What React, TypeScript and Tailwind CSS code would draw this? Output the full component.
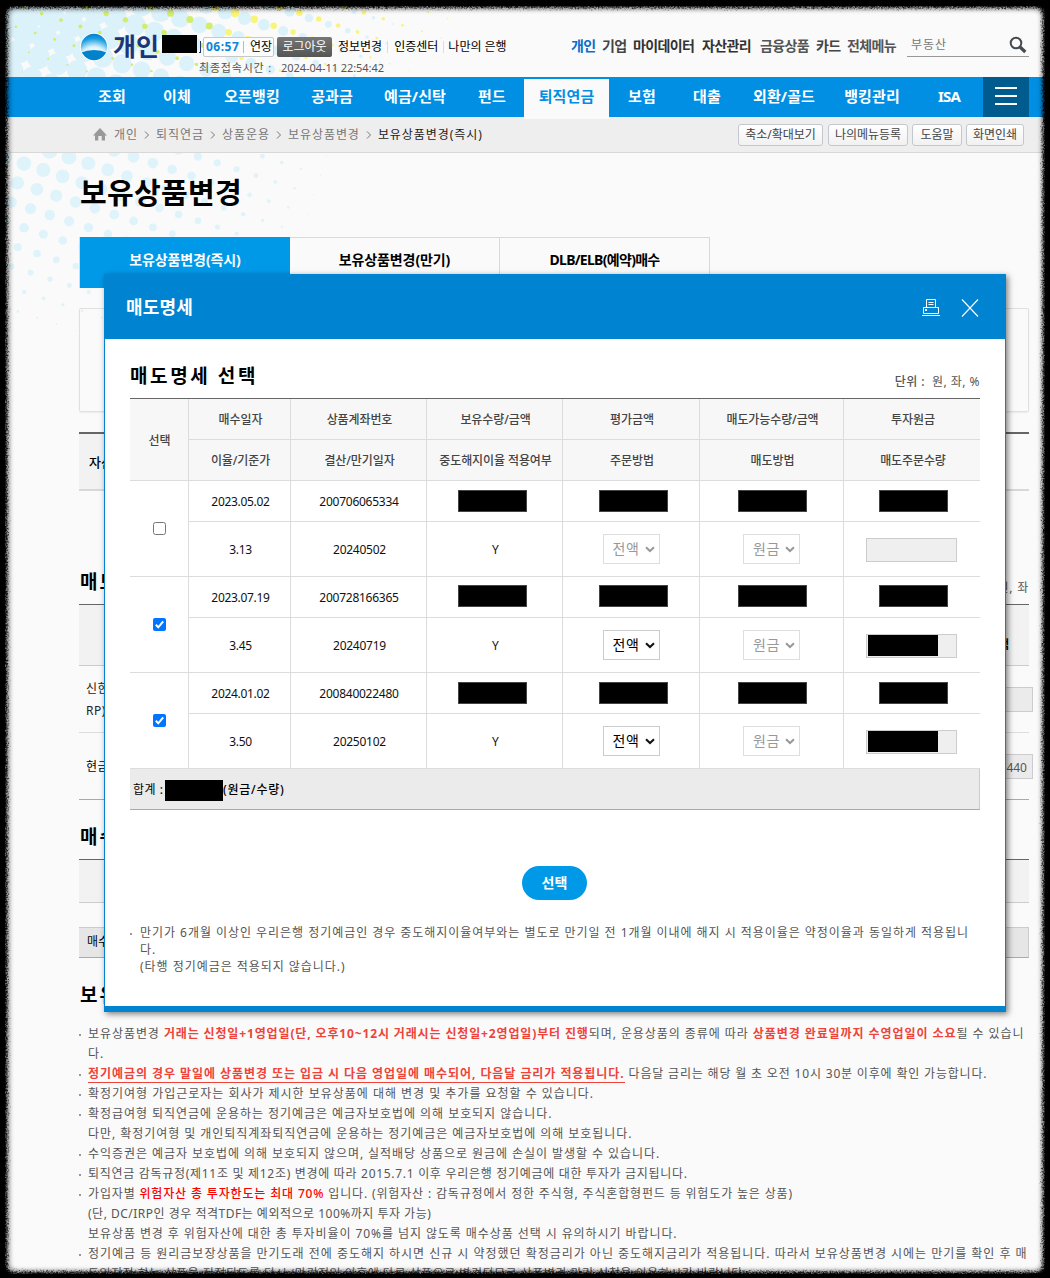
import type { ReactNode } from "react";

const gnbItems = [
  { label: "조회", width: "w-[64px]" },
  { label: "이체", width: "w-[66px]" },
  { label: "오픈뱅킹", width: "w-[84px]" },
  { label: "공과금", width: "w-[76px]" },
  { label: "예금/신탁", width: "w-[90px]" },
  { label: "펀드", width: "w-[64px]" },
  { label: "퇴직연금", width: "w-[85px]", active: true },
  { label: "보험", width: "w-[66px]" },
  { label: "대출", width: "w-[64px]" },
  { label: "외환/골드", width: "w-[90px]" },
  { label: "뱅킹관리", width: "w-[86px]" },
  { label: "ISA", width: "w-[68px]" },
];

const siteLinks = [
  { label: "개인", style: "w-[31px] text-[#0a6fc9]" },
  { label: "기업", style: "w-[31px] text-[#444]" },
  { label: "마이데이터", style: "w-[69px] text-[#333]" },
  { label: "자산관리", style: "w-[58px] text-[#333]" },
  { label: "금융상품", style: "w-[56px] text-[#555]" },
  { label: "카드", style: "w-[31px] text-[#444]" },
  { label: "전체메뉴", style: "w-[60px] text-[#555]" },
];

const crumbs = ["개인", "퇴직연금", "상품운용", "보유상품변경", "보유상품변경(즉시)"];

const pageTools = [
  { label: "축소/확대보기", style: "w-[85px]" },
  { label: "나의메뉴등록", style: "ml-[5px] w-[80px]" },
  { label: "도움말", style: "ml-1 w-[50px]" },
  { label: "화면인쇄", style: "ml-1 w-[58px]" },
];

const headTop = ["매수일자", "상품계좌번호", "보유수량/금액", "평가금액", "매도가능수량/금액", "투자원금"];
const headBottom = ["이율/기준가", "결산/만기일자", "중도해지이율 적용여부", "주문방법", "매도방법", "매도주문수량"];

const holdings = [
  { date: "2023.05.02", account: "200706065334", rate: "3.13", due: "20240502", checked: false, shift: "" },
  { date: "2023.07.19", account: "200728166365", rate: "3.45", due: "20240719", checked: true, shift: "pb-[3px]" },
  { date: "2024.01.02", account: "200840022480", rate: "3.50", due: "20250102", checked: true, shift: "" },
];

// halftone grid used by the page background
function lattice(x0: number, y0: number, maxX: number, minY: number, maxY: number, radius: (x: number, y: number) => number) {
  const dots: { x: number; y: number; r: number }[] = [];
  for (let a = -30; a <= 30; a++) {
    for (let b = -30; b <= 30; b++) {
      const x = x0 + a * 19.35 - b * 6.4;
      const y = y0 + a * 6.35 + b * 19.3;
      if (x < -10 || x > maxX || y < minY || y > maxY) continue;
      const r = radius(x, y);
      if (r > 0.3) dots.push({ x, y, r });
    }
  }
  return dots;
}

const headerBlue = lattice(309, 18, 420, -15, 95, (x, y) => 15.4 * (1 - Math.hypot((x - 20) / 400, y / 230)));
const headerYellow = lattice(235, 13, 500, -5, 77, (x, y) => {
  const side = x < 235 ? 1 - (235 - x) / 330 : 1 - (x - 235) / 260;
  return 5 * side * (1 - y / 105);
});
const bodyBlue = lattice(69, 157, 400, 140, 340, (x, y) => 7.9 * (1 - Math.hypot(Math.max(x - 60, 0) / 290, (y - 150) / 195)));

function Halftone() {
  return (
    <svg className="pointer-events-none absolute left-0 top-0" width="1050" height="360" viewBox="0 0 1050 360">
      <defs>
        <clipPath id="header-area">
          <rect width="1050" height="77" />
        </clipPath>
      </defs>
      <g clipPath="url(#header-area)">
        {headerBlue.map((d, i) => (
          <circle key={i} cx={d.x} cy={d.y} r={d.r} fill="#dcf2fa" />
        ))}
        {headerYellow.map((d, i) => (
          <circle key={i} cx={d.x} cy={d.y} r={d.r} fill={d.x < 215 ? "#d2ec6c" : "#f9f47c"} />
        ))}
      </g>
      {bodyBlue.map((d, i) => (
        <circle key={i} cx={d.x} cy={d.y} r={d.r} fill="#dff3fa" />
      ))}
    </svg>
  );
}

function TornFrame() {
  return (
    <svg className="pointer-events-none absolute left-0 top-0 z-30" width="1050" height="1278" viewBox="0 0 1050 1278">
      <defs>
        <filter id="torn" x="0" y="0" width="1050" height="1278" filterUnits="userSpaceOnUse">
          <feGaussianBlur in="SourceGraphic" stdDeviation="1.5" result="soft" />
          <feTurbulence type="fractalNoise" baseFrequency="0.6" numOctaves="2" seed="4" result="noise" />
          <feDisplacementMap in="soft" in2="noise" scale="6" xChannelSelector="R" yChannelSelector="G" />
        </filter>
        <filter id="haze" x="0" y="0" width="1050" height="1278" filterUnits="userSpaceOnUse">
          <feGaussianBlur in="SourceGraphic" stdDeviation="2" />
        </filter>
      </defs>
      <path
        filter="url(#haze)"
        fillRule="evenodd"
        opacity="0.35"
        d="M-30 -30H1080V1308H-30Z M16 10H1034Q1041 10 1041 17V1262Q1041 1270 1034 1270H17Q10 1270 10 1262V17Q10 10 16 10Z"
      />
      <path
        filter="url(#torn)"
        fillRule="evenodd"
        d="M-30 -30H1080V1308H-30Z M14 7.500H1036Q1043 7.500 1043 15V1264Q1043 1272 1036 1272H14Q7 1272 7 1264V15Q7 7.500 14 7.500Z"
      />
      <path fillRule="evenodd" d="M0 0H1050V1278H0Z M5 6V1274H1045V6Z" />
    </svg>
  );
}

function Logo() {
  return (
    <svg className="shrink-0" width="28" height="28" viewBox="0 0 28 28">
      <defs>
        <radialGradient id="logo-sky" cx="0.5" cy="1" r="1">
          <stop offset="0.35" stopColor="#ffffff" />
          <stop offset="0.52" stopColor="#d5effb" />
          <stop offset="0.8" stopColor="#1b9fe0" />
          <stop offset="1" stopColor="#0078c8" />
        </radialGradient>
        <clipPath id="logo-clip">
          <circle cx="14" cy="14" r="13.2" />
        </clipPath>
      </defs>
      <circle cx="14" cy="14" r="14" fill="#fff" />
      <g clipPath="url(#logo-clip)">
        <rect width="28" height="28" fill="url(#logo-sky)" />
        <path d="M0 20Q14 14 28 20V28H0Z" fill="#0083cb" />
      </g>
    </svg>
  );
}

function Arrow({ color }: { color: string }) {
  return (
    <svg width="10" height="7" viewBox="0 0 10 7" fill="none" stroke={color} strokeWidth="2">
      <path d="M1 1.200L5 5L9 1.200" />
    </svg>
  );
}

function SelectBox({ label, disabled }: { label: string; disabled: boolean }) {
  return (
    <div
      className={`flex h-[30px] w-[57px] items-center justify-between border bg-white pl-[9px] pr-[4px] text-[14px] leading-7 tracking-[0.5px] ${
        disabled ? "border-[#dedede] text-[#999]" : "border-[#ccc] text-black"
      }`}
    >
      {label}
      <Arrow color={disabled ? "#999" : "#111"} />
    </div>
  );
}

function Checkbox({ checked }: { checked: boolean }) {
  if (!checked) return <span className="h-[13px] w-[13px] rounded-[2.5px] border border-[#767676] bg-white" />;
  return (
    <span className="flex h-[13px] w-[13px] items-center justify-center rounded-[2px] bg-[#0075ff]">
      <svg width="11" height="11" viewBox="0 0 11 11" fill="none" stroke="#fff" strokeWidth="2">
        <path d="M1.800 5.800L4.300 8.300L9.200 2.300" />
      </svg>
    </span>
  );
}

function Masked() {
  return <span className="h-[22px] w-[69px] border border-[#444] bg-black" />;
}

function Cell({ children, className = "" }: { children?: ReactNode; className?: string }) {
  return <div className={`flex items-center justify-center border-b border-r border-[#dcdcdc] ${className}`}>{children}</div>;
}

function Note({ children, className = "" }: { children: ReactNode; className?: string }) {
  return (
    <li className={`flex ${className}`}>
      <span className="mt-[11px] h-[2px] w-[2px] shrink-0 bg-[#999]" />
      <div className="ml-[7px] whitespace-nowrap pt-px -mb-px">{children}</div>
    </li>
  );
}

function Header() {
  return (
    <header className="relative flex h-[77px] pl-[80px]">
      <div className="flex w-[119px] pt-[33px]">
        <Logo />
        <span className="ml-[5px] -mt-[3px] w-[47px] shrink-0 whitespace-nowrap text-[25px] font-bold leading-[32px] text-[#1c3578]">개인</span>
        <span className="ml-[2px] mt-[2px] h-[18px] w-[35px] shrink-0 bg-black" />
        <span className="ml-[2px] mt-[8px] h-[12px] w-[2px] shrink-0 border-b border-r border-[#1c3578]" />
      </div>
      <div className="w-[372px] pt-[37px]">
        <div className="flex h-5 items-center whitespace-nowrap pl-1 text-[12px] text-black">
          <div className="flex h-5 w-[71px] items-center rounded-[2px] border border-[#c8c8c8] bg-[#fcfcfc] pl-[2px]">
            <b className="w-[37px] text-[12px] tracking-[0.5px] text-[#0c86d8]">06:57</b>
            <span className="h-3 w-px bg-[#bbb]" />
            <span className="ml-[6px]">연장</span>
          </div>
          <div className="ml-[3px] flex h-5 w-[55px] items-center justify-center rounded-[2px] bg-linear-to-b from-[#777] to-[#555] text-white">
            로그아웃
          </div>
          <span className="ml-[6px]">정보변경</span>
          <span className="ml-[5px] h-3 w-px bg-[#ddd]" />
          <span className="ml-[6px]">인증센터</span>
          <span className="ml-[5px] h-3 w-px bg-[#ddd]" />
          <span className="ml-[4px]">나만의 은행</span>
        </div>
        <p className="flex whitespace-nowrap text-[11px] leading-[22px] text-[#555]">
          <span className="w-[82px] tracking-[0.8px]">최종접속시간 :</span>
          <span className="tracking-[-0.05px]">2024-04-11 22:54:42</span>
        </p>
      </div>
      <nav className="flex whitespace-nowrap pt-[36px] text-[14px] font-bold leading-5 tracking-[-0.65px]">
        {siteLinks.map((link) => (
          <a key={link.label} className={link.style}>
            {link.label}
          </a>
        ))}
      </nav>
      <div className="mt-[32px] flex h-[25px] w-[122px] justify-between border-b border-[#999] pl-1 pr-[2px] text-[12px] leading-[26px] tracking-[0.9px] text-[#777]">
        부동산
        <svg className="mt-[4px]" width="18" height="18" viewBox="0 0 18 18" fill="none" stroke="#444b50">
          <circle cx="7" cy="7" r="5.300" strokeWidth="2" />
          <path d="M11 11L16.300 16" strokeWidth="3.200" />
        </svg>
      </div>
    </header>
  );
}

function MainNav() {
  return (
    <nav className="relative z-10 flex h-10 bg-[#008fe3] pl-[80px] text-[15px] font-bold leading-[38px] tracking-[0.1px] text-white">
      {gnbItems.map((item) =>
        item.active ? (
          <a key={item.label} className={`mt-[2px] h-10 bg-[#fafafa] text-center leading-[34px] text-[#008fe3] ${item.width}`}>
            {item.label}
          </a>
        ) : (
          <a key={item.label} className={`text-center ${item.label === "ISA" ? "tracking-[-0.8px]" : ""} ${item.width}`}>
            {item.label}
          </a>
        )
      )}
      <div className="flex w-[46px] flex-col items-center gap-[6px] bg-[#005b8e] pt-[10px]">
        <span className="h-[2px] w-[22px] bg-white" />
        <span className="h-[2px] w-[22px] bg-white" />
        <span className="h-[2px] w-[22px] bg-white" />
      </div>
    </nav>
  );
}

function LocationBar() {
  return (
    <div className="relative flex h-9 items-start border-b border-[#d8d8d8] bg-[#eee] pl-[93px] text-[12px] text-[#777]">
      <svg className="mt-[11px]" width="14" height="13" viewBox="0 0 14 13" fill="#999">
        <path d="M7 0L14 7.500H12V12.500H8.700V8H5.300V12.500H2V7.500H0Z" />
      </svg>
      <ol className="ml-[7px] flex w-[624px] whitespace-nowrap leading-[36px] tracking-[0.95px]">
        {crumbs.map((crumb, i) => (
          <li key={crumb} className={`flex items-center ${i === crumbs.length - 1 ? "text-[#222]" : ""}`}>
            {i > 0 && (
              <svg className="ml-[6px] mr-[6px]" width="6" height="8" viewBox="0 0 6 8" fill="none" stroke="#777">
                <path d="M1 0.500L4.500 4L1 7.500" />
              </svg>
            )}
            {crumb}
          </li>
        ))}
      </ol>
      <div className="mt-[7px] flex">
        {pageTools.map((tool) => (
          <button
            key={tool.label}
            className={`h-[22px] whitespace-nowrap rounded-[3px] border border-[#c3c8cf] bg-linear-to-b from-white to-[#f1f1f1] text-center leading-5 text-[#444] ${tool.style}`}
          >
            {tool.label}
          </button>
        ))}
      </div>
    </div>
  );
}

function PageBody() {
  return (
    <main className="relative ml-[79px] w-[950px] text-black">
      <h1 className="h-[84px] pl-px pt-[20px] text-[29px] font-bold leading-10 tracking-[0.3px]">보유상품변경</h1>
      <div className="flex h-[51px] text-center text-[14px] font-bold leading-[44px] tracking-[-0.1px]">
        <div className="w-[211px] border-l border-[#d9d9d9] bg-[#0099e8] leading-[46px] text-white">보유상품변경(즉시)</div>
        <div className="w-[210px] border-r border-t border-[#d9d9d9]">보유상품변경(만기)</div>
        <div className="w-[210px] border-r border-t border-[#d9d9d9] tracking-[-0.7px]">DLB/ELB(예약)매수</div>
      </div>
      <div className="mt-5 h-[104px] rounded-[2px] border border-[#e0e0e0] shadow-[0_1px_2px_rgba(0,0,0,0.06)]" />
      <div className="mt-5 flex h-[59px] border-b-2 border-t-2 border-b-[#d8d8d8] border-t-[#666]">
        <div className="w-[120px] bg-[#f2f2f2] pl-[10px] text-[13px] font-medium leading-[56px]">자산현황</div>
      </div>
      <div className="flex h-[113px] justify-between pt-[77px]">
        <h2 className="pl-px text-[19px] font-bold leading-7 tracking-[2px]">매도상품</h2>
        <p className="pt-[8px] text-[12px] leading-6 tracking-[0.8px] text-[#555]">단위 : 원, 좌</p>
      </div>
      <div className="flex h-[62px] justify-end border-b border-t border-b-[#ccc] border-t-[#666] bg-[#f2f2f2] pr-[20px] pt-[28px] text-[12px] font-bold leading-6">
        금액
      </div>
      <div className="flex h-[67px] justify-between border-b border-[#ddd] text-[12px]">
        <p className="whitespace-nowrap pl-[7px] pt-[12px] leading-[22px] tracking-[0.5px] text-[#222]">
          신한은행
          <br />
          RP)
        </p>
        <div className="-mr-1 mt-[21px] h-[25px] w-[90px] border border-[#ccc] bg-[#ebebeb]" />
      </div>
      <div className="flex h-[67px] justify-between border-b border-[#aaa] text-[12px] tracking-[0.5px]">
        <p className="pl-[7px] leading-[68px]">현금성자산</p>
        <div className="-mr-1 mt-[21px] h-[25px] w-[90px] border border-[#ccc] bg-[#ebebeb] pr-[5px] text-right text-[12px] leading-[25px] tracking-[0px] text-[#555]">
          1,440
        </div>
      </div>
      <h2 className="h-[59px] pl-px pt-[23px] text-[19px] font-bold leading-7 tracking-[2px]">매수상품</h2>
      <div className="h-[44px] border-b border-t border-b-[#ccc] border-t-[#666] bg-[#f2f2f2]" />
      <div className="mt-6 h-[31px] border border-l-0 border-[#ccc] border-b-[#aaa] bg-[#e6e6e6] pl-[8px] text-[12px] leading-7">매수합계</div>
      <h2 className="h-[65px] pl-px pt-[23px] text-[19px] font-bold leading-7 tracking-[2px]">보유상품변경 안내</h2>
      <ul className="text-[12px] leading-5 tracking-[0.98px] text-[#555]">
        <Note className="tracking-[0.93px]">
          보유상품변경{" "}
          <b className="font-bold tracking-[0.86px] text-[#f04238]">거래는 신청일+1영업일(단, 오후10~12시 거래시는 신청일+2영업일)부터 진행</b>
          되며, 운용상품의 종류에 따라 <b className="font-bold text-[#f04238]">상품변경 완료일까지 수영업일이 소요</b>될 수 있습니
          <br />
          다.
        </Note>
        <Note className="tracking-[0.82px]">
          <b className="border-b border-[#f04238] font-bold tracking-[0.94px] text-[#f04238]">
            정기예금의 경우 말일에 상품변경 또는 입금 시 다음 영업일에 매수되어, 다음달 금리가 적용됩니다.
          </b>{" "}
          다음달 금리는 해당 월 초 오전 10시 30분 이후에 확인 가능합니다.
        </Note>
        <Note>확정기여형 가입근로자는 회사가 제시한 보유상품에 대해 변경 및 추가를 요청할 수 있습니다.</Note>
        <Note className="tracking-[0.95px]">
          확정급여형 퇴직연금에 운용하는 정기예금은 예금자보호법에 의해 보호되지 않습니다.
          <br />
          다만, 확정기여형 및 개인퇴직계좌퇴직연금에 운용하는 정기예금은 예금자보호법에 의해 보호됩니다.
        </Note>
        <Note className="tracking-[0.94px]">
          수익증권은 예금자 보호법에 의해 보호되지 않으며, 실적배당 상품으로 원금에 손실이 발생할 수 있습니다.
        </Note>
        <Note className="tracking-[0.7px]">
          퇴직연금 감독규정(제11조 및 제12조) 변경에 따라 2015.7.1 이후 우리은행 정기예금에 대한 투자가 금지됩니다.
        </Note>
        <Note>
          <span className="tracking-[0.84px]">
            가입자별 <span className="font-medium text-[#f00]">위험자산 총 투자한도는 최대 70%</span> 입니다. (위험자산 : 감독규정에서 정한 주식형, 주식혼합형펀드 등
            위험도가 높은 상품)
          </span>
          <br />
          <span className="tracking-[0.5px]">(단, DC/IRP인 경우 적격TDF는 예외적으로 100%까지 투자 가능)</span>
          <br />
          <span className="tracking-[0.92px]">보유상품 변경 후 위험자산에 대한 총 투자비율이 70%를 넘지 않도록 매수상품 선택 시 유의하시기 바랍니다.</span>
        </Note>
        <Note>
          정기예금 등 원리금보장상품을 만기도래 전에 중도해지 하시면 신규 시 약정했던 확정금리가 아닌 중도해지금리가 적용됩니다. 따라서 보유상품변경 시에는 만기를 확인 후 매
          <br />
          <span className="tracking-[0.5px]">
            도일지정 하는 상품을 저정되도록 다시 (만기전일 이후에 다른 상품으로 변경되므로 상품변경 만기 신청을 이용하시기 바랍니다.
          </span>
        </Note>
      </ul>
    </main>
  );
}

function HoldingsTable() {
  return (
    <div className="grid grid-cols-[59px_102px_136px_136px_137px_144px_136px] border-t border-[#666] text-[12px]">
      <Cell className="row-span-2 border-[#ccc] bg-[#f7f7f7] pl-px pt-[2px] font-medium text-[#444]">선택</Cell>
      {[...headTop, ...headBottom].map((label, i) => (
        <Cell
          key={label}
          className={`h-[41px] whitespace-nowrap border-[#ccc] bg-[#f7f7f7] pl-[2px] pt-[2px] font-medium tracking-[-0.1px] text-[#444] ${
            i % 6 === 5 ? "border-r-0" : ""
          }`}
        >
          {label}
        </Cell>
      ))}
      {holdings.map((row) => (
        <div key={row.account} className="contents text-[#111]">
          <Cell className="row-span-2">
            <Checkbox checked={row.checked} />
          </Cell>
          <Cell className="h-[41px] pl-[2px] pt-[2px] tracking-[-0.3px]">{row.date}</Cell>
          <Cell className="pl-px pt-[2px] tracking-[-0.25px]">{row.account}</Cell>
          <Cell className={`pr-[4px] ${row.shift}`}>
            <Masked />
          </Cell>
          <Cell className={`pl-[5px] ${row.shift}`}>
            <Masked />
          </Cell>
          <Cell className={`pl-px ${row.shift}`}>
            <Masked />
          </Cell>
          <Cell className={`border-r-0 pl-[3px] ${row.shift}`}>
            <Masked />
          </Cell>
          <Cell className="h-[55px] pl-[2px] pt-[2px] tracking-[-0.3px]">{row.rate}</Cell>
          <Cell className="pl-[2px] pt-[2px] tracking-[-0.25px]">{row.due}</Cell>
          <Cell className="pl-[2px] pt-[2px]">Y</Cell>
          <Cell>
            <SelectBox label="전액" disabled={!row.checked} />
          </Cell>
          <Cell>
            <SelectBox label="원금" disabled />
          </Cell>
          <Cell className="border-r-0 pr-[2px] pt-px">
            <div className="h-6 w-[91px] border border-[#ccc] bg-[#efefef] pl-px">
              {row.checked && <div className="h-[21px] w-[70px] bg-black" />}
            </div>
          </Cell>
        </div>
      ))}
      <div className="col-span-7 flex h-[41px] items-center border-b border-r border-b-[#aaa] border-r-[#ccc] bg-[#ebebeb] pl-[3px] pt-[2px] text-black">
        <span className="w-[32px] whitespace-nowrap tracking-[0.5px]">합계 :</span>
        <span className="h-[21px] w-[58px] bg-black" />
        <span className="font-medium tracking-[0.75px]">(원금/수량)</span>
      </div>
    </div>
  );
}

function SellDialog() {
  return (
    <section className="absolute left-[104px] top-[274px] z-20 flex h-[738px] w-[902px] flex-col border-x border-b-[6px] border-[#0083d0] bg-white shadow-[2px_2px_6px_rgba(0,0,0,0.5)]">
      <header className="flex h-[65px] shrink-0 items-center bg-[#0083d0] pl-[21px] pr-[26px] pt-[2px] text-white">
        <h2 className="flex-1 text-[18px] font-bold tracking-[0.2px]">매도명세</h2>
        <svg width="18" height="18" viewBox="0 0 18 18" fill="none" stroke="#fff">
          <path d="M4.500 8.500V0.500H13.500V8.500M6.500 3.500H11.500M6.500 5.500H11.500M1.500 8.500H16.500V14.500H1.500ZM0 16.500H18" />
          <path d="M3 11H5" strokeWidth="2" />
        </svg>
        <svg className="ml-[21px]" width="18" height="18" viewBox="0 0 18 18" fill="none" stroke="#fff" strokeWidth="1.100">
          <path d="M1 0.500L17 17.500M17 0.500L1 17.500" />
        </svg>
      </header>
      <div className="flex flex-col px-[25px]">
        <div className="flex h-[59px] justify-between">
          <h3 className="pt-[22px] text-[19px] font-bold leading-[30px] tracking-[2.6px]">매도명세 선택</h3>
          <p className="pt-[33px] text-[12px] leading-5 tracking-[0.45px] text-[#555]">
            <b className="font-medium">단위 :</b>&nbsp; 원, 좌, %
          </p>
        </div>
        <HoldingsTable />
        <button className="-ml-px mt-14 h-[34px] w-[65px] self-center rounded-full bg-[#0099e8] pb-[2px] text-[14px] font-bold text-white">
          선택
        </button>
        <div className="mt-[23px] flex text-[12px] leading-[17px] tracking-[0.96px] text-[#555]">
          <span className="mt-[10px] h-[2px] w-[2px] shrink-0 bg-[#999]" />
          <p className="ml-[8px] whitespace-nowrap pt-px">
            만기가 6개월 이상인 우리은행 정기예금인 경우 중도해지이율여부와는 별도로 만기일 전 1개월 이내에 해지 시 적용이율은 약정이율과 동일하게 적용됩니
            <br />
            다.
            <br />
            (타행 정기예금은 적용되지 않습니다.)
          </p>
        </div>
      </div>
    </section>
  );
}

export default function App() {
  return (
    <div className="relative h-[1278px] w-[1050px] overflow-hidden bg-[#fafafa] font-['Noto_Sans','Noto_Sans_CJK_KR',sans-serif]">
      <Halftone />
      <Header />
      <MainNav />
      <LocationBar />
      <PageBody />
      <SellDialog />
      <TornFrame />
    </div>
  );
}
